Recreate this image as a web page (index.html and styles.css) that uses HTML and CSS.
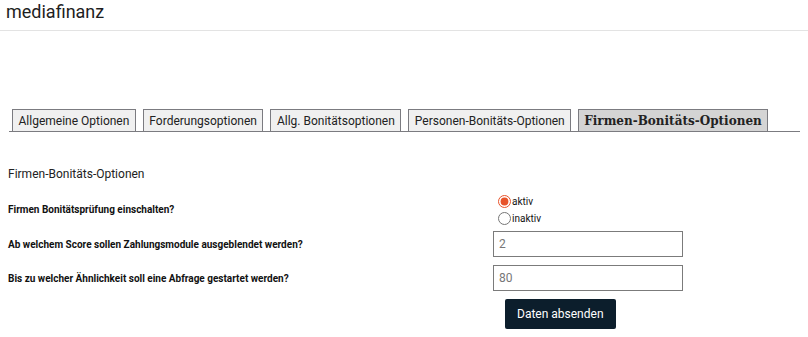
FILE: index.html
```html
<!DOCTYPE html>
<html lang="de">
<head>
  <meta charset="UTF-8" />
  <title>mediafinanz</title>
  <link rel="stylesheet" href="styles.css">
</head>
<body>
  <header class="topbar">mediafinanz</header>

  <nav class="tabs">
    <button class="tab">Allgemeine Optionen</button>
    <button class="tab">Forderungsoptionen</button>
    <button class="tab">Allg. Bonitätsoptionen</button>
    <button class="tab">Personen-Bonitäts-Optionen</button>
    <button class="tab active">Firmen-Bonitäts-Optionen</button>
  </nav>

  <form class="options">
    <h2 class="section-title">Firmen-Bonitäts-Optionen</h2>

    <div class="row row-radio">
      <label class="label">Firmen Bonitätsprüfung einschalten?</label>
      <div class="field radios">
        <label class="radio"><input type="radio" name="active" checked> aktiv</label>
        <label class="radio"><input type="radio" name="active"> inaktiv</label>
      </div>
    </div>

    <div class="row">
      <label class="label">Ab welchem Score sollen Zahlungsmodule ausgeblendet werden?</label>
      <div class="field"><input class="text" type="text" value="2"></div>
    </div>

    <div class="row">
      <label class="label">Bis zu welcher Ähnlichkeit soll eine Abfrage gestartet werden?</label>
      <div class="field"><input class="text" type="text" value="80"></div>
    </div>

    <div class="row">
      <span class="label"></span>
      <div class="field"><button class="submit" type="button">Daten absenden</button></div>
    </div>
  </form>
</body>
</html>
```

FILE: styles.css
```css
body {
  margin: 0;
  font-family: Roboto, "Liberation Sans", sans-serif;
  color: #222;
  background: #fff;
}

.topbar {
  height: 30px;
  padding: 0 6px;
  font-size: 18px;
  line-height: 24px;
  color: #1e1e1e;
  border-bottom: 1px solid #e3e3e3;
}

.tabs {
  display: flex;
  gap: 7px;
  margin: 78px 8px 0 9px;
  padding-left: 3px;
  border-bottom: 1px solid #7b7b80;
}

.tab {
  font-family: Roboto, "Liberation Sans", sans-serif;
  font-size: 12px;
  color: #222;
  background: #f0f0f0;
  border: 1px solid #7b7b80;
  border-bottom: none;
  padding: 3px 5.5px 2px;
  height: 22px;
  margin: 0;
}

.tab.active {
  font-family: "DejaVu Serif", serif;
  font-weight: bold;
  font-size: 12px;
  background: #d4d4d4;
  padding: 2px 5px;
}

.options {
  padding: 0 8px;
}

.section-title {
  font-size: 12px;
  font-weight: normal;
  margin: 35px 0 12px;
  color: #222;
}

.row {
  display: flex;
  align-items: center;
  margin-bottom: 8px;
}

.row-radio {
  margin-bottom: 5px;
}

.label {
  width: 485px;
  font-size: 10px;
  font-weight: bold;
  color: #111;
}

.radios {
  display: flex;
  flex-direction: column;
  gap: 1px;
  padding-left: 5px;
}

.radio {
  display: flex;
  align-items: center;
  gap: 1px;
  height: 16px;
  font-size: 10px;
  color: #111;
}

.radio input {
  margin: 0;
  width: 13px;
  height: 13px;
  accent-color: #e8532a;
}

.text {
  box-sizing: border-box;
  width: 190px;
  height: 26px;
  border: 1px solid #7b7b7b;
  padding: 0 5px;
  font-family: Roboto, "Liberation Sans", sans-serif;
  font-size: 12px;
  color: #777;
}

.submit {
  margin-left: 12px;
  background: #0c1e2c;
  color: #fff;
  border: none;
  border-radius: 2px;
  height: 30px;
  padding: 0 12px;
  font-family: Roboto, "Liberation Sans", sans-serif;
  font-size: 12px;
}
```
